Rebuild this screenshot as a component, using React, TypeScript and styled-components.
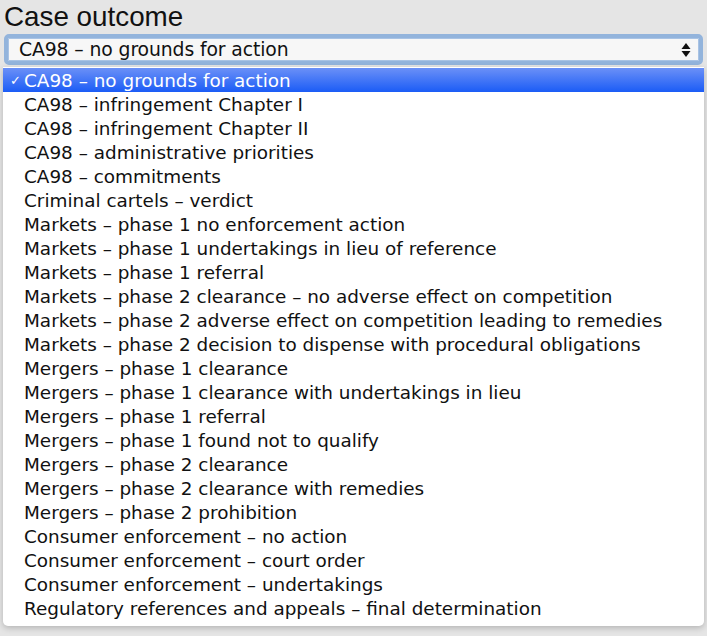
import React, { FC, useState } from 'react';
import styled, { createGlobalStyle } from 'styled-components';

const options = [
	'CA98 – no grounds for action',
	'CA98 – infringement Chapter I',
	'CA98 – infringement Chapter II',
	'CA98 – administrative priorities',
	'CA98 – commitments',
	'Criminal cartels – verdict',
	'Markets – phase 1 no enforcement action',
	'Markets – phase 1 undertakings in lieu of reference',
	'Markets – phase 1 referral',
	'Markets – phase 2 clearance – no adverse effect on competition',
	'Markets – phase 2 adverse effect on competition leading to remedies',
	'Markets – phase 2 decision to dispense with procedural obligations',
	'Mergers – phase 1 clearance',
	'Mergers – phase 1 clearance with undertakings in lieu',
	'Mergers – phase 1 referral',
	'Mergers – phase 1 found not to qualify',
	'Mergers – phase 2 clearance',
	'Mergers – phase 2 clearance with remedies',
	'Mergers – phase 2 prohibition',
	'Consumer enforcement – no action',
	'Consumer enforcement – court order',
	'Consumer enforcement – undertakings',
	'Regulatory references and appeals – final determination',
];

const GlobalStyle = createGlobalStyle`
	html, body {
		margin: 0;
		padding: 0;
		background: #e5e5e5;
	}
	body {
		font-family: "DejaVu Sans", Verdana, sans-serif;
	}
`;

const App: FC = () => {
	const [selected, setSelected] = useState(0);

	return (
		<>
			<GlobalStyle />
			<Page>
				<Label>Case outcome</Label>
				<SelectBox>
					<SelectValue>{options[selected]}</SelectValue>
					<Arrows viewBox="0 0 10 16" width="10" height="16">
						<path d="M5 1 L9.5 7 L0.5 7 Z" fill="#111" />
						<path d="M5 15 L9.5 9 L0.5 9 Z" fill="#111" />
					</Arrows>
				</SelectBox>
				<Menu>
					{options.map((opt, i) => (
						<Option key={i} active={i === selected} onClick={() => setSelected(i)}>
							<Check>{i === selected ? '✓' : ''}</Check>
							{opt}
						</Option>
					))}
				</Menu>
			</Page>
		</>
	);
};

export default App;

const Page = styled.div`
	display: flex;
	flex-direction: column;
	padding: 1px 3px 0 3px;
	width: 707px;
	height: 636px;
	box-sizing: border-box;
`;

const Label = styled.div`
	font-family: "Liberation Sans", Arial, sans-serif;
	font-size: 27.8px;
	line-height: 31px;
	color: #111;
	padding-left: 1px;
`;

const SelectBox = styled.div`
	margin: 2px 1px 0 1px;
	height: 31px;
	box-sizing: border-box;
	border: 4px solid #93b4dc;
	border-radius: 5px;
	background: #f7f7f7;
	display: flex;
	align-items: center;
	padding: 0 8px 0 11px;
	box-shadow: inset 0 0 0 1px #a9c3e4;
`;

const SelectValue = styled.div`
	flex: 1;
	font-size: 18.8px;
	letter-spacing: -0.1px;
	color: #111;
	white-space: nowrap;
`;

const Arrows = styled.svg`
	display: block;
`;

const Menu = styled.div`
	margin-top: 2px;
	width: 701px;
	background: #fff;
	border-radius: 0 0 5px 5px;
	box-shadow: 0 2px 6px rgba(0, 0, 0, 0.22);
	padding: 1px 0 6px 0;
	display: flex;
	flex-direction: column;
`;

const Option = styled.div<{ active?: boolean }>`
	display: flex;
	align-items: center;
	height: 24px;
	font-size: 18.4px;
	white-space: nowrap;
	color: ${p => (p.active ? '#fff' : '#111')};
	background: ${p => (p.active ? 'linear-gradient(to bottom, #6b90f7, #1b5cf6)' : 'transparent')};
	cursor: default;
`;

const Check = styled.span`
	display: inline-block;
	flex: none;
	width: 21px;
	padding-left: 7px;
	box-sizing: border-box;
	font-size: 13px;
	font-weight: bold;
	overflow: hidden;
`;
